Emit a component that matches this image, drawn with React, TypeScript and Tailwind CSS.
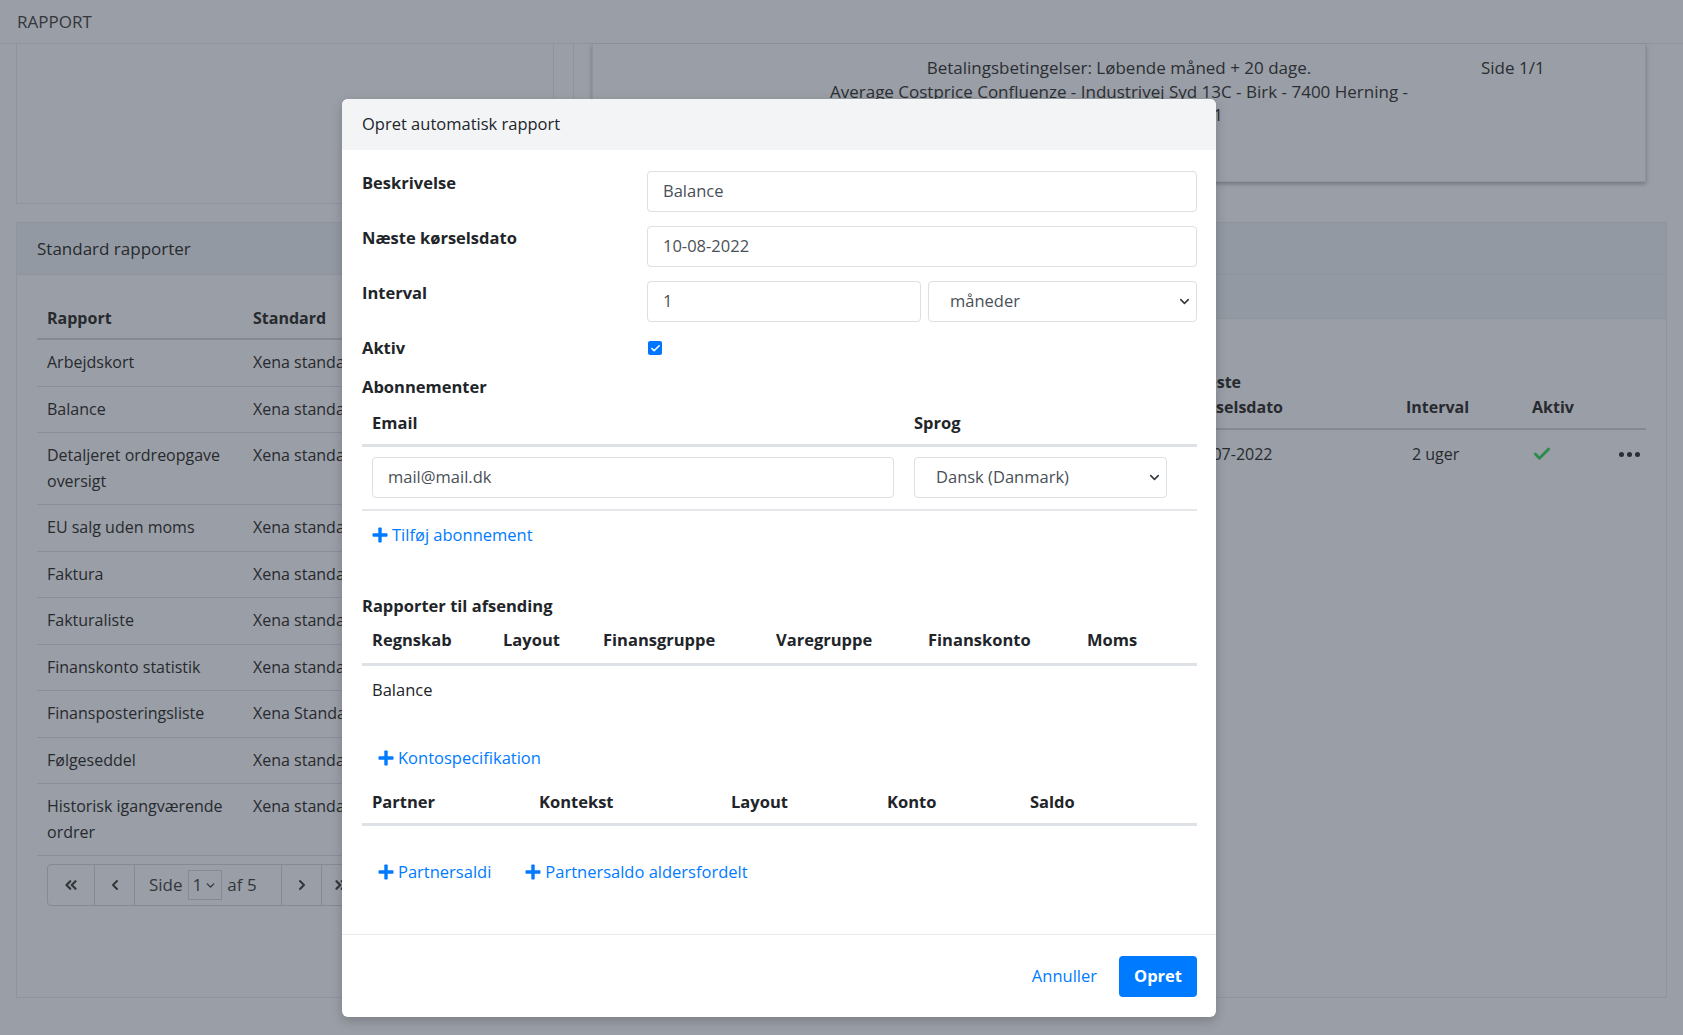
import React from 'react';
import { ChevronDown, ChevronLeft, ChevronRight, ChevronsLeft, ChevronsRight, Check } from 'lucide-react';

const leftRows: { name: string[]; std: string }[] = [
  { name: ['Arbejdskort'], std: 'Xena standard' },
  { name: ['Balance'], std: 'Xena standard' },
  { name: ['Detaljeret ordreopgave', 'oversigt'], std: 'Xena standard' },
  { name: ['EU salg uden moms'], std: 'Xena standard' },
  { name: ['Faktura'], std: 'Xena standard' },
  { name: ['Fakturaliste'], std: 'Xena standard' },
  { name: ['Finanskonto statistik'], std: 'Xena standard' },
  { name: ['Finansposteringsliste'], std: 'Xena Standard' },
  { name: ['Følgeseddel'], std: 'Xena standard' },
  { name: ['Historisk igangværende', 'ordrer'], std: 'Xena standard' },
];

const PlusIcon = () => (
  <svg width="16" height="16" viewBox="0 0 16 16" className="mr-[4px] shrink-0">
    <rect x="6.3" y="0.5" width="3.4" height="15" rx="0.8" fill="#007bff" />
    <rect x="0.5" y="6.3" width="15" height="3.4" rx="0.8" fill="#007bff" />
  </svg>
);

const AddLink = ({ label, className = '' }: { label: string; className?: string }) => (
  <span className={`flex items-center text-[#007bff] leading-[24px] ${className}`}>
    <PlusIcon />
    {label}
  </span>
);

const Input = ({ value, className = '' }: { value: string; className?: string }) => (
  <div className={`h-[41px] flex items-center px-[15px] border border-[#dcdfe3] rounded-[4px] text-[#495057] bg-white ${className}`}>
    {value}
  </div>
);

const Select = ({ value, className = '' }: { value: string; className?: string }) => (
  <div className={`h-[41px] flex items-center justify-between pl-[21px] pr-[4px] border border-[#dcdfe3] rounded-[4px] text-[#495057] bg-white ${className}`}>
    <span>{value}</span>
    <ChevronDown size={15} strokeWidth={2.5} className="text-[#343a40]" />
  </div>
);

const FormRow = ({ label, children }: { label: string; children: React.ReactNode }) => (
  <div className="flex items-start">
    <div className="w-[285px] font-bold leading-[24px]">{label}</div>
    <div className="flex-1">{children}</div>
  </div>
);

export default function App() {
  return (
    <div className="relative w-[1683px] h-[1035px] overflow-hidden bg-[#9a9ea6] text-[#272a2e] text-[16px] font-['Open_Sans',sans-serif]">
      {/* top bar */}
      <div className="h-[44px] border-b border-[#8f949c] flex items-center pl-[17px] text-[17px] text-[#33373c]">RAPPORT</div>

      {/* upper area */}
      <div className="flex h-[160px]">
        <div className="ml-[16px] w-[538px] h-[160px] border-x border-b border-[#8f949c]" />
        <div className="ml-[19px] w-px h-full bg-[#8f949c]" />
        <div className="ml-[18px] w-[1054px] h-[138px] border-x border-b border-[#8f949c] shadow-[0_2px_4px_rgba(0,0,0,0.25)] relative text-[#2b2e33]">
          <div className="pt-[12px] text-center text-[17px] leading-[23.5px]">
            <div>Betalingsbetingelser: Løbende måned + 20 dage.</div>
            <div>Average Costprice Confluenze - Industrivej Syd 13C - Birk - 7400 Herning -</div>
          </div>
          <div className="w-[630px] text-right text-[17px] leading-[23.5px]">Tlf. 12345678 - CVR 12345671</div>
          <div className="absolute left-[888px] top-[12px] text-[17px] leading-[23.5px]">Side 1/1</div>
        </div>
      </div>

      {/* standard rapporter card */}
      <div className="mx-[16px] mt-[18px] h-[776px] border border-[#8f949c] flex flex-col">
        <div className="h-[52px] shrink-0 bg-[#9399a2] border-b border-[#8f949c] flex items-center pl-[20px] text-[17px]">Standard rapporter</div>
        <div className="flex flex-1">
          <div className="w-[540px] pl-[20px] pt-[23px]">
            <div className="flex h-[42px] items-center font-bold border-b-2 border-[#858a92]">
              <div className="w-[206px] pl-[10px]">Rapport</div>
              <div className="pl-[10px]">Standard</div>
            </div>
            {leftRows.map((r, i) => (
              <div key={i} className="flex border-b border-[#8a8f97] py-[10px] leading-[25.5px]">
                <div className="w-[206px] pl-[10px]">
                  {r.name.map((n, j) => (
                    <div key={j}>{n}</div>
                  ))}
                </div>
                <div className="pl-[10px] whitespace-nowrap">{r.std}</div>
              </div>
            ))}
            <div className="mt-[8px] ml-[10px] flex h-[42px] w-[314px] border border-[#868b93] rounded-[4px] text-[#33373c]">
              <div className="w-[47px] flex items-center justify-center border-r border-[#868b93]">
                <ChevronsLeft size={18} strokeWidth={3} />
              </div>
              <div className="w-[40px] flex items-center justify-center border-r border-[#868b93]">
                <ChevronLeft size={16} strokeWidth={3} />
              </div>
              <div className="w-[147px] flex items-center pl-[14px] border-r border-[#868b93] text-[17px]">
                Side
                <span className="mx-[5px] flex items-center h-[30px] px-[4px] border border-[#868b93]">
                  1<ChevronDown size={13} strokeWidth={2.5} className="ml-[2px]" />
                </span>
                af 5
              </div>
              <div className="w-[40px] flex items-center justify-center border-r border-[#868b93]">
                <ChevronRight size={16} strokeWidth={3} />
              </div>
              <div className="flex-1 flex items-center justify-center">
                <ChevronsRight size={18} strokeWidth={3} />
              </div>
            </div>
          </div>
          <div className="flex-1 flex flex-col">
            <div className="h-[44px] bg-[#9399a2] border-b border-[#8f949c]" />
            <div className="pt-[51px] pr-[20px] pl-[20px]">
              <div className="flex items-end border-b-2 border-[#858a92] pb-[8px] font-bold leading-[25px]">
                <div className="w-[612px]" />
                <div className="w-[217px] leading-[25px]">
                  <div>Næste</div>
                  <div>kørselsdato</div>
                </div>
                <div className="w-[126px]">Interval</div>
                <div className="w-[87px]">Aktiv</div>
              </div>
              <div className="flex items-center h-[48px]">
                <div className="w-[612px]" />
                <div className="w-[217px]">10-07-2022</div>
                <div className="w-[126px] pl-[6px]">2 uger</div>
                <div className="w-[87px]">
                  <Check size={20} strokeWidth={3.5} className="text-[#2e8b4e]" />
                </div>
                <div className="flex gap-[3px]">
                  <span className="w-[5px] h-[5px] rounded-full bg-[#2b2e33]" />
                  <span className="w-[5px] h-[5px] rounded-full bg-[#2b2e33]" />
                  <span className="w-[5px] h-[5px] rounded-full bg-[#2b2e33]" />
                </div>
              </div>
            </div>
          </div>
        </div>
      </div>

      {/* modal */}
      <div className="absolute left-[342px] top-[99px] w-[874px] h-[918px] bg-white rounded-[6px] shadow-[0_4px_12px_rgba(0,0,0,0.2)] flex flex-col text-[#212529] text-[16.5px]">
        <div className="h-[51px] shrink-0 bg-[#f3f4f6] rounded-t-[6px] flex items-center pl-[20px]">Opret automatisk rapport</div>
        <div className="flex-1 pl-[20px] pr-[19px] pt-[21px]">
          <div className="flex flex-col gap-[14px]">
            <FormRow label="Beskrivelse">
              <Input value="Balance" />
            </FormRow>
            <FormRow label="Næste kørselsdato">
              <Input value="10-08-2022" />
            </FormRow>
            <FormRow label="Interval">
              <div className="flex gap-[7px]">
                <Input value="1" className="w-[274px]" />
                <Select value="måneder" className="flex-1" />
              </div>
            </FormRow>
            <FormRow label="Aktiv">
              <div className="h-[24px] flex items-center pl-[1px]">
                <span className="w-[14px] h-[14px] rounded-[2px] bg-[#0075ff] flex items-center justify-center">
                  <Check size={11} strokeWidth={3.5} className="text-white" />
                </span>
              </div>
            </FormRow>
          </div>

          <div className="mt-[15px] font-bold leading-[24px]">Abonnementer</div>
          <div className="grid grid-cols-[542px_263px_30px] h-[48px] pt-[4px] items-center font-bold border-b-[3px] border-[#dee2e6]">
            <div className="pl-[10px]">Email</div>
            <div className="pl-[10px]">Sprog</div>
            <div />
          </div>
          <div className="grid grid-cols-[542px_263px_30px] pt-[10px] pb-[11px] border-b-2 border-[#e5e7ea]">
            <div className="px-[10px]">
              <Input value="mail@mail.dk" />
            </div>
            <div className="pl-[10px]">
              <Select value="Dansk (Danmark)" />
            </div>
            <div />
          </div>
          <AddLink label="Tilføj abonnement" className="mt-[12px] pl-[10px]" />

          <div className="mt-[47px] font-bold leading-[24px]">Rapporter til afsending</div>
          <div className="grid grid-cols-[131px_100px_173px_152px_159px_120px] h-[48px] items-center font-bold border-b-[3px] border-[#dee2e6]">
            <div className="pl-[10px]">Regnskab</div>
            <div className="pl-[10px]">Layout</div>
            <div className="pl-[10px]">Finansgruppe</div>
            <div className="pl-[10px]">Varegruppe</div>
            <div className="pl-[10px]">Finanskonto</div>
            <div className="pl-[10px]">Moms</div>
          </div>
          <div className="pl-[10px] pt-[12px] leading-[24px]">Balance</div>

          <AddLink label="Kontospecifikation" className="mt-[44px] pl-[16px]" />
          <div className="grid grid-cols-[167px_192px_156px_143px_177px] h-[56px] pt-[12px] items-center font-bold border-b-[3px] border-[#dee2e6]">
            <div className="pl-[10px]">Partner</div>
            <div className="pl-[10px]">Kontekst</div>
            <div className="pl-[10px]">Layout</div>
            <div className="pl-[10px]">Konto</div>
            <div className="pl-[10px]">Saldo</div>
          </div>
          <div className="flex mt-[34px] pl-[16px] gap-[34px]">
            <AddLink label="Partnersaldi" />
            <AddLink label="Partnersaldo aldersfordelt" />
          </div>
        </div>
        <div className="h-[83px] shrink-0 border-t border-[#e9ecef] flex items-center justify-end pr-[19px] gap-[22px]">
          <span className="text-[#007bff]">Annuller</span>
          <span className="h-[41px] w-[78px] rounded-[4px] bg-[#007bff] text-white font-bold flex items-center justify-center">Opret</span>
        </div>
      </div>
    </div>
  );
}
